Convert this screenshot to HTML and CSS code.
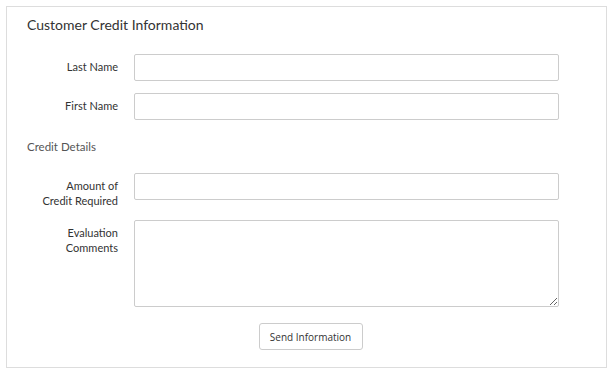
FILE: index.html
```html
<!DOCTYPE html>
<html lang="en">
<head>
    <meta charset="UTF-8">
    <meta name="viewport" content="width=device-width, initial-scale=1.0">
    <title>Customer Credit Information</title>
    <link rel="stylesheet" href="styles.css">
</head>
<body>
    <div class="panel">
        <h2 class="panel-title">Customer Credit Information</h2>
        <form class="form">
            <div class="row">
                <label class="label" for="lastName">Last Name</label>
                <input class="field" type="text" id="lastName">
            </div>
            <div class="row">
                <label class="label" for="firstName">First Name</label>
                <input class="field" type="text" id="firstName">
            </div>
            <div class="section">Credit Details</div>
            <div class="row">
                <label class="label" for="amount">Amount of<br>Credit Required</label>
                <input class="field" type="text" id="amount">
            </div>
            <div class="row">
                <label class="label" for="comments">Evaluation<br>Comments</label>
                <textarea class="field area" id="comments"></textarea>
            </div>
            <div class="actions">
                <button type="button" class="btn">Send Information</button>
            </div>
        </form>
    </div>
</body>
</html>
```

FILE: styles.css
```css
body {
    font-family: "Lato", "Open Sans", sans-serif;
    margin: 6px;
    padding: 0;
    background-color: #fff;
    color: #333;
}
.panel {
    width: 601px;
    height: 362px;
    border: 1px solid #ddd;
    padding: 0 20px;
    box-sizing: border-box;
}
.panel-title {
    margin: 0;
    padding-top: 8px;
    font-size: 14px;
    font-weight: normal;
    color: #333;
    line-height: 20px;
}
.form {
    margin-top: 19px;
}
.row {
    display: grid;
    grid-template-columns: 91px 425px;
    column-gap: 16px;
    align-items: start;
    margin-bottom: 12px;
}
.label {
    text-align: right;
    font-size: 11px;
    line-height: 15px;
    padding-top: 5px;
    color: #333;
}
.field {
    box-sizing: border-box;
    width: 425px;
    height: 27px;
    margin: 0;
    border: 1px solid #ccc;
    border-radius: 2px;
    font-family: inherit;
    font-size: 12px;
    padding: 4px 6px;
    display: block;
}
.area {
    height: 87px;
    resize: vertical;
}
.section {
    font-size: 11.5px;
    color: #555;
    margin: 19px 0 18px;
    line-height: 16px;
}
.actions {
    display: flex;
    justify-content: center;
    margin-top: 16px;
    margin-left: 8px;
}
.btn {
    font-family: "Open Sans", sans-serif;
    font-size: 10px;
    color: #333;
    background-color: #fff;
    border: 1px solid #ccc;
    border-radius: 3px;
    width: 104px;
    height: 27px;
    padding: 0;
}
```
